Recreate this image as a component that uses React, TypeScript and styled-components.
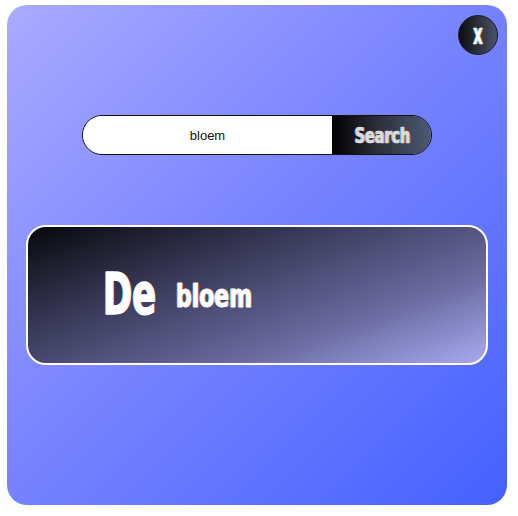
import React from "react";
import styled, { createGlobalStyle } from "styled-components";

const Global = createGlobalStyle`
  html, body { margin: 0; padding: 0; background: #ffffff; }
  body { font-family: "Liberation Sans", Arial, sans-serif; }
`;

const condensed = `Impact, "DejaVu Sans Condensed", "DejaVu Sans", sans-serif`;

const Page = styled.div`
  padding: 5px 7px;
`;

const Panel = styled.div`
  position: relative;
  width: 500px;
  height: 500px;
  box-sizing: border-box;
  border-radius: 20px;
  background: linear-gradient(135deg, #aaaaff 0%, #7a85ff 45%, #4561ff 100%);
  display: flex;
  flex-direction: column;
  align-items: center;
  padding-top: 110px;
`;

const Tall = styled.span<{ $size: number; $stretch: number; $dy?: number; $color?: string; $weight?: number }>`
  display: inline-block;
  font-family: ${condensed};
  font-stretch: condensed;
  font-weight: bold;
  font-size: ${(p) => p.$size}px;
  line-height: 1;
  color: ${(p) => p.$color ?? "#ffffff"};
  -webkit-text-stroke: ${(p) => p.$weight ?? 0.6}px ${(p) => p.$color ?? "#ffffff"};
  transform: translateY(${(p) => p.$dy ?? 0}px) scaleY(${(p) => p.$stretch});
  transform-origin: center center;
  text-shadow: -1px 0 rgba(90, 200, 255, 0.9), 1px 0 rgba(230, 120, 40, 0.9);
`;

const CloseButton = styled.button`
  position: absolute;
  top: 10px;
  right: 9px;
  width: 40px;
  height: 40px;
  border-radius: 50%;
  border: 1px solid #1a1a22;
  background: linear-gradient(90deg, #0c0c10 0%, #4a5468 100%);
  display: flex;
  align-items: center;
  justify-content: center;
  padding: 0;
`;

const SearchBar = styled.form`
  display: flex;
  width: 350px;
  height: 40px;
  box-sizing: border-box;
  border: 1px solid #111;
  border-radius: 20px;
  overflow: hidden;
`;

const SearchInput = styled.input`
  flex: 0 0 249px;
  border: none;
  outline: none;
  background: #ffffff;
  text-align: center;
  font-family: "Liberation Sans", Arial, sans-serif;
  font-size: 13px;
  color: #111;
  padding: 0;
`;

const SearchButton = styled.button`
  flex: 1;
  border: none;
  background: linear-gradient(90deg, #000000 0%, #2a2e3a 45%, #4d5a72 100%);
  padding: 0 0 0 2px;
  display: flex;
  align-items: center;
  justify-content: center;
`;

const ResultCard = styled.div`
  margin-top: 70px;
  width: 462px;
  height: 140px;
  box-sizing: border-box;
  border: 2px solid #ffffff;
  border-radius: 20px;
  background: linear-gradient(160deg, #08080c 0%, #3a3a5a 35%, #6a6aa0 70%, #a8a8f0 100%);
  display: flex;
  align-items: center;
  gap: 20px;
  padding-left: 75px;
`;

export default function App() {
  return (
    <>
      <Global />
      <Page>
        <Panel>
          <CloseButton type="button">
            <Tall $size={13} $stretch={1.58} $dy={1} $weight={0.4}>X</Tall>
          </CloseButton>
          <SearchBar onSubmit={(e) => e.preventDefault()}>
            <SearchInput defaultValue="bloem" />
            <SearchButton type="submit">
              <Tall $size={16} $stretch={1.28} $dy={2} $weight={0.5} $color="#dcdcdc">Search</Tall>
            </SearchButton>
          </SearchBar>
          <ResultCard>
            <Tall $size={39} $stretch={1.48} $dy={-1} $weight={1}>De</Tall>
            <Tall $size={24.4} $stretch={1.3} $dy={2} $weight={0.7}>bloem</Tall>
          </ResultCard>
        </Panel>
      </Page>
    </>
  );
}
